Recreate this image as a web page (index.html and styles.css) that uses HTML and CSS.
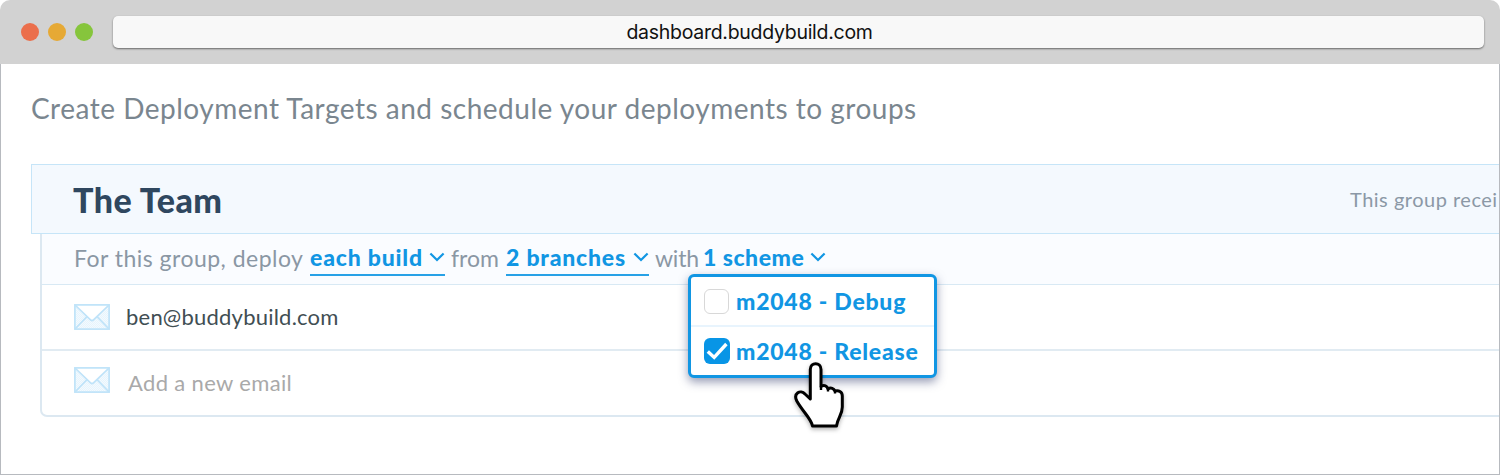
FILE: index.html
```html
<!DOCTYPE html>
<html lang="en">
<head>
<meta charset="utf-8">
<title>Deployment Targets</title>
<link rel="stylesheet" href="styles.css">
</head>
<body>
<svg class="defs" width="0" height="0" aria-hidden="true">
  <defs>
    <pattern id="dots" width="2" height="2" patternUnits="userSpaceOnUse">
      <rect width="2" height="2" fill="#f4fafe"/><rect width="1" height="1" fill="#e6f4fd"/><rect x="1" y="1" width="1" height="1" fill="#e6f4fd"/>
    </pattern>
    <symbol id="envelope" viewBox="0 0 36 26">
      <rect x="1" y="1" width="34" height="24" fill="url(#dots)"/>
      <path d="M1 1 L18 17 L35 1Z" fill="#fff"/>
      <path d="M1 1 L16.5 15.8 Q18 17.2 19.5 15.8 L35 1 M1 25 L13 12.6 M35 25 L23 12.6" fill="none" stroke="#bfe3f9" stroke-width="1.7"/>
      <rect x=".9" y=".9" width="34.2" height="24.2" fill="none" stroke="#bfe3f9" stroke-width="1.7"/>
    </symbol>
    <symbol id="chevron" viewBox="0 0 16 10">
      <path d="M1.4 1.5 L8 8 L14.6 1.5" fill="none" stroke="#1196e3" stroke-width="2.2"/>
    </symbol>
  </defs>
</svg>
<div class="browser">
  <header class="toolbar">
    <div class="lights"><i class="light red"></i><i class="light amber"></i><i class="light green"></i></div>
    <div class="address"><span class="url">dashboard.buddybuild.com</span></div>
  </header>
  <main class="page">
    <h1 class="heading"><span>Create Deployment Targets and schedule your deployments to groups</span></h1>
    <section class="group">
      <div class="group-head"><h2 class="group-name">The Team</h2><span class="group-note">This group recei</span></div>
      <div class="group-body">
        <div class="rule">
          <span class="words lead">For this group, deploy</span>
          <a class="pick build"><span>each build</span><svg class="chev"><use href="#chevron"/></svg></a>
          <span class="words from">from</span>
          <a class="pick branches"><span>2 branches</span><svg class="chev"><use href="#chevron"/></svg></a>
          <span class="words with">with</span>
          <a class="pick scheme"><span>1 scheme</span><svg class="chev"><use href="#chevron"/></svg></a>
        </div>
        <div class="member"><svg class="mail"><use href="#envelope"/></svg><span class="email">ben@buddybuild.com</span></div>
        <div class="member last"><svg class="mail"><use href="#envelope"/></svg><span class="hint">Add a new email</span></div>
      </div>
    </section>
  </main>
  <div class="menu">
    <div class="option"><i class="box"></i><span class="debug">m2048 - Debug</span></div>
    <div class="option"><svg class="box-on" viewBox="0 0 26 26"><rect width="26" height="26" rx="6" fill="#0895e6"/><path d="M3.8 13.4 L10.2 19.4 L22.4 6" fill="none" stroke="#fff" stroke-width="3.4"/></svg><span class="release">m2048 - Release</span></div>
  </div>
  <svg class="hand" viewBox="0 0 56 72">
    <path d="M20.3 41 V11.5 C20.3 3.7 31 3.7 31 11.5 V28.5 C34.5 26.5 37 28 38 31 C41 29 43.8 30.5 45 33 C48.5 32 52.3 33.5 52.3 38 V49 C52.3 57 47.7 59.5 46.5 68 H22.5 C21.5 61 13 54 6.8 43 C3 35.5 10.5 31 15 36 Z" fill="#fff" stroke="#000" stroke-width="3" stroke-linejoin="round"/>
    <path d="M38 30 V33.5 M45 32 V35.5 M31 28 V32" stroke="#000" stroke-width="2.4"/>
  </svg>
</div>
</body>
</html>
```
FILE: styles.css
```css
* { box-sizing: border-box; }
body { margin: 0; background: #fff; font-family: Lato, "Open Sans", sans-serif; }
.defs { position: absolute; }
.browser { position: relative; width: 1500px; height: 475px; overflow: hidden; display: flex; flex-direction: column; white-space: nowrap; }
.toolbar { height: 64px; flex: none; display: flex; align-items: center; padding: 0 16px 0 21px; background: #d2d2d2; border-radius: 10px 10px 0 0; }
.lights { display: flex; gap: 9px; margin-right: 20px; }
.light { width: 18px; height: 18px; border-radius: 50%; }
.red { background: #eb6f4c; }
.amber { background: #e6a935; }
.green { background: #86c53c; }
.address { flex: 1; height: 32px; display: flex; align-items: center; justify-content: center; padding-right: 98px; background: #f8f8f8; border-radius: 5px; box-shadow: 0 1px 2px rgba(0,0,0,.5); }
.url { font: 19.5px/32px Inter, sans-serif; color: #111; letter-spacing: -.28px; }
.page { flex: 1; border: 1px solid #b7babf; border-top: 0; padding: 24px 0 0 30px; overflow: hidden; }
.heading { margin: 0; height: 76px; font-size: 28px; line-height: 40px; font-weight: 400; color: #7a868f; letter-spacing: .5px; }
.group { width: 1600px; }
.group-head { height: 70px; display: flex; align-items: center; padding-left: 41px; background: #f4f9fe; border: 1px solid #c6e5f8; }
.group-name { margin: 0; width: 1277px; font-size: 34px; line-height: 70px; padding-top: 1px; font-weight: 900; color: #2f475f; letter-spacing: .5px; }
.group-note { font-size: 20px; color: #8b98a6; letter-spacing: .5px; }
.group-body { margin-left: 9px; border: 2px solid #dce8f1; border-top: 0; border-radius: 0 0 7px 7px; }
.rule { height: 51px; display: flex; align-items: flex-start; padding: 6px 0 0 32px; background: #fafcff; border-bottom: 1px solid #d8e9f4; font-size: 23px; line-height: 36px; }
.words { color: #8a97a4; }
.lead { width: 236px; letter-spacing: .48px; }
.from { width: 55px; }
.with { width: 48px; letter-spacing: -.2px; }
.pick { height: 36px; display: flex; justify-content: space-between; align-items: center; color: #1196e3; font-weight: 900; border-bottom: 2px solid #27a1e6; letter-spacing: .8px; }
.build { width: 135px; margin-right: 6px; }
.branches { width: 143px; margin-right: 6px; }
.scheme { width: 123px; border-color: transparent; letter-spacing: .5px; }
.chev { width: 16px; height: 10px; }
.member { height: 66px; display: flex; align-items: center; padding-left: 31px; border-bottom: 2px solid #e1ebf2; }
.last { height: 64px; border: 0; padding-bottom: 6px; }
.mail { width: 36px; height: 26px; margin-left: 1px; }
.email { margin: -2px 0 0 16px; font-size: 22px; color: #414e53; letter-spacing: .22px; }
.hint { margin: 4px 0 0 18px; font-size: 22px; color: #a9a9a9; letter-spacing: .35px; }
.menu { position: absolute; left: 688px; top: 274px; width: 249px; height: 104px; background: #fff; border: 3px solid #1196e3; border-radius: 6px; box-shadow: 0 4px 10px rgba(50,60,110,.5); color: #1196e3; font-size: 23px; font-weight: 900; }
.option { height: 47px; display: flex; align-items: center; padding-left: 13px; letter-spacing: .75px; }
.option:first-child { border-bottom: 2px solid #e8f4fd; height: 50px; }
.box { width: 25px; height: 25px; border: 1px solid #d8d8d8; border-radius: 6px; }
.box-on { width: 26px; height: 26px; }
.debug { margin-left: 7px; }
.release { margin-left: 6px; }
.hand { position: absolute; left: 790px; top: 358px; width: 56px; height: 72px; filter: drop-shadow(0 2px 2px rgba(0,0,0,.3)); }
```
